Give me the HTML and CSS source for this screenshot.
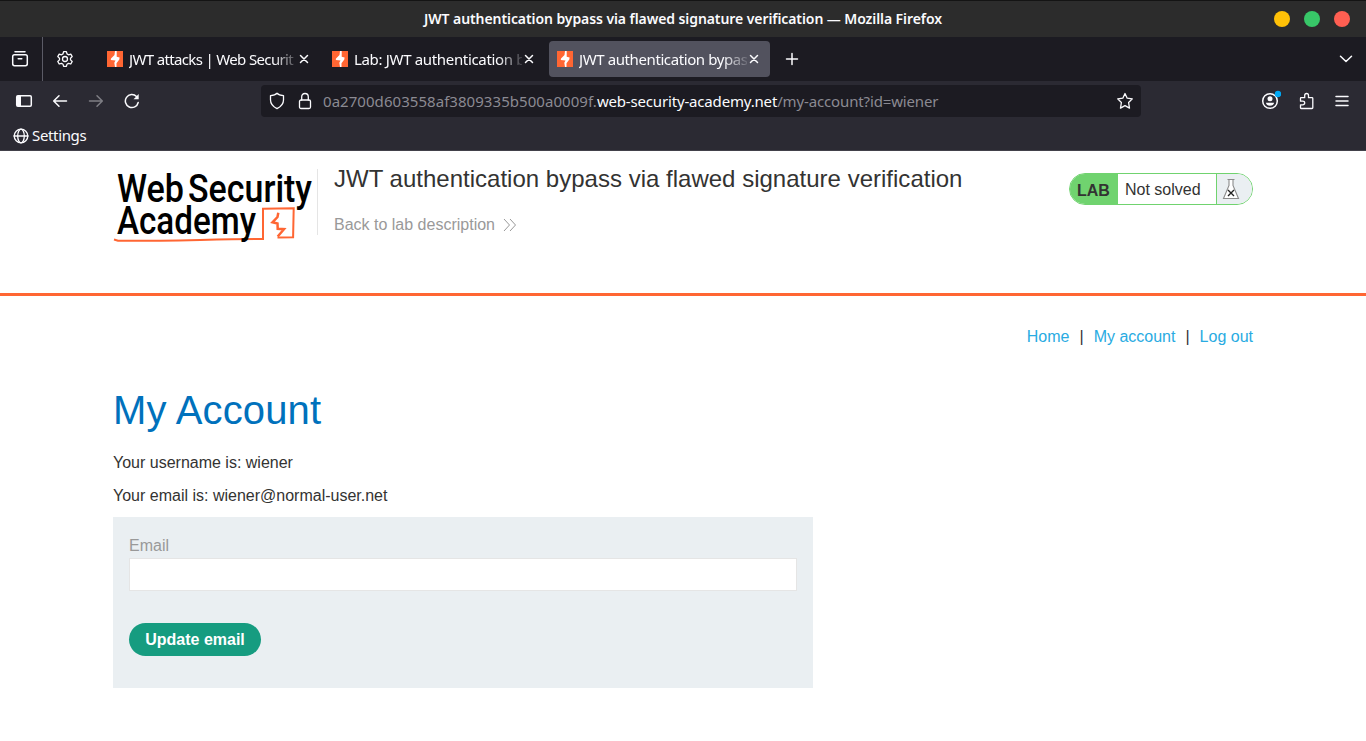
FILE: index.html
```html
<!DOCTYPE html>
<html lang="en">
<head>
<meta charset="utf-8">
<title>JWT authentication bypass via flawed signature verification</title>
<link rel="stylesheet" href="styles.css">
</head>
<body>
<svg class="defs" width="0" height="0">
  <symbol id="bolt" viewBox="0 0 16 16"><path fill="#ff6633" d="M0 0h16v16H0z"/><path fill="#fff" d="M8 0h1.700v5.700l2.900.9-.3 2L9.500 12.300V16H8l-.7-4.200 1.200-2.200-4.700-.7.200-1.400L7.500 4z"/></symbol>
  <symbol id="close" viewBox="0 0 10 10"><path d="M1.500 1.500l7 7M8.500 1.500l-7 7" stroke="#fbfbfe" stroke-width="1.500" stroke-linecap="round"/></symbol>
</svg>
<header class="browser">
  <div class="titlebar">
    <span class="window-title">JWT authentication bypass via flawed signature verification — Mozilla Firefox</span>
    <div class="window-buttons"><i class="min"></i><i class="max"></i><i class="quit"></i></div>
  </div>
  <div class="tabbar">
    <div class="tab-tool archive"><svg class="icon" width="18" height="18" viewBox="0 0 18 18"><path d="M4 1.700h10M3.500 4.700h11q1.800 0 1.800 1.800v7.300q0 1.900-1.800 1.900h-11q-1.800 0-1.800-1.900V6.500q0-1.800 1.800-1.800zM7.200 8.800h3.600"/></svg></div>
    <div class="tab-tool gear"><svg class="icon thin" width="18" height="18" viewBox="0 0 18 18"><circle cx="9" cy="9" r="2.500"/><path d="M7.600 1.600h2.800l.6 2.300 1.500.9 2.300-.7 1.400 2.500-1.700 1.600v1.700l1.700 1.600-1.400 2.500-2.300-.7-1.500.9-.6 2.200H7.600L7 14.200l-1.500-.9-2.300.7-1.400-2.500 1.700-1.600V8.200L1.800 6.600l1.400-2.500 2.300.7L7 3.900z"/></svg></div>
    <div class="tabs">
      <div class="tab"><svg width="16" height="16"><use href="#bolt"/></svg><span class="tab-title t1">JWT attacks | Web Securit</span><svg class="x" width="10" height="10"><use href="#close"/></svg></div>
      <div class="tab"><svg width="16" height="16"><use href="#bolt"/></svg><span class="tab-title t2">Lab: JWT authentication b</span><svg class="x" width="10" height="10"><use href="#close"/></svg></div>
      <div class="tab active"><svg width="16" height="16"><use href="#bolt"/></svg><span class="tab-title t3">JWT authentication bypas</span><svg class="x" width="10" height="10"><use href="#close"/></svg></div>
    </div>
    <svg class="icon plus" width="14" height="14" viewBox="0 0 14 14"><path d="M7 1.500v11M1.500 7h11"/></svg>
    <svg class="icon chevron" width="14" height="8" viewBox="0 0 14 8"><path d="M1.500 1.200L7 6.500l5.500-5.300"/></svg>
  </div>
  <div class="toolbar">
    <svg class="icon sidebar" width="18" height="14" viewBox="0 0 18 14"><rect x="1.700" y="1.700" width="14.600" height="10.600" rx="1.200"/><path class="solid" d="M2 2h4v10H2z"/></svg>
    <svg class="icon back" width="16" height="14" viewBox="0 0 16 14"><path d="M14.500 7H2M7 1.700L1.700 7 7 12.300"/></svg>
    <svg class="icon forward" width="16" height="14" viewBox="0 0 16 14"><path d="M1.500 7H14M9 1.700L14.300 7 9 12.300"/></svg>
    <svg class="icon reload" width="16" height="16" viewBox="0 0 16 16"><path d="M14.200 9.500A6.500 6.500 0 1 1 12.500 3.500"/><path class="solid" d="M14.700 1v5.200H9.500z"/></svg>
    <div class="urlbar">
      <svg class="icon thin shield" width="16" height="18" viewBox="0 0 16 18"><path d="M8 1.300C6.500 3 3.800 3.500 1.500 3.600V8c0 3.600 2.700 6.700 6.500 8.700 3.800-2 6.500-5.100 6.500-8.700V3.600C12.200 3.500 9.500 3 8 1.300z"/></svg>
      <svg class="icon thin lock" width="14" height="18" viewBox="0 0 14 18"><rect x="1.500" y="8" width="11" height="8.500" rx="1.500"/><path d="M3.700 8V5q0-3.500 3.300-3.500T10.300 5v3"/></svg>
      <span class="url"><span class="u1">0a2700d603558af3809335b500a0009f.</span><b class="u2">web-security-academy.net</b><span class="u3">/my-account?id=wiener</span></span>
      <svg class="icon thin star" width="18" height="18" viewBox="0 0 18 18"><path d="M9 1.500l2.200 4.700 5.100.7-3.700 3.600.9 5.600L9 13.600 4.500 16.100l.9-5.600L1.700 6.900l5.100-.7z"/></svg>
    </div>
    <svg class="icon account" width="20" height="20" viewBox="0 0 20 20"><circle cx="9" cy="11" r="7.300"/><circle class="solid" cx="9" cy="8.800" r="2.500"/><path class="solid" d="M4.800 12.700h8.400q-.8 3-4.200 3t-4.200-3z"/><circle cx="17" cy="4" r="3.200" fill="#00a8f4" stroke="none"/></svg>
    <svg class="icon thin puzzle" width="16" height="18" viewBox="0 0 16 18"><path d="M2 5.700h3.700V3.500q0-2 1.900-2t1.900 2v2.200H13q.8 0 .8.800v9.200q0 .8-.8.800H2q-.5 0-.5-.8v-2.900h2.200q2 0 2-1.800t-2-1.800H1.500V6.500q0-.8.500-.8z"/></svg>
    <svg class="icon menu" width="14" height="12" viewBox="0 0 14 12"><path d="M1 1.500h12M1 6h12M1 10.500h12"/></svg>
  </div>
  <div class="bookmarks">
    <svg class="icon thin" width="16" height="16" viewBox="0 0 16 16"><circle cx="8" cy="8" r="6.800"/><ellipse cx="8" cy="8" rx="3.300" ry="6.800"/><path d="M1 8h14"/></svg>
    <span class="bm">Settings</span>
  </div>
</header>
<section class="lab-header">
  <svg class="logo" width="204" height="76" viewBox="0 0 204 76">
    <g class="logo-text">
      <text x="4" y="34" textLength="67" lengthAdjust="spacingAndGlyphs">Web</text>
      <text x="75" y="34" textLength="124" lengthAdjust="spacingAndGlyphs">Security</text>
    </g>
    <path d="M1 71.500l4 1.300c50 .4 95-1.600 145-1.800V40.800l30.700-.6-.6 29-15.600.2" fill="none" stroke="#ff6633" stroke-width="2"/>
    <path d="M165.300 44.700l-.8 4.300-5 5.300 5 1.200.2 5.300 6.300.4-6.300 7.300" fill="none" stroke="#ff6633" stroke-width="2.500"/>
    <g class="logo-text"><text x="4" y="66" textLength="139" lengthAdjust="spacingAndGlyphs">Academy</text></g>
  </svg>
  <div class="lab-title">
    <h2>JWT authentication bypass via flawed signature verification</h2>
    <a class="back-link">Back to lab description <svg width="14" height="14" viewBox="0 0 14 14"><path d="M1 1l5.500 6L1 13M7 1l5.500 6L7 13" fill="none" stroke="#999"/></svg></a>
  </div>
  <div class="status"><b>LAB</b><span>Not solved</span><i><svg width="18" height="22" viewBox="0 0 18 22"><path d="M5.500 1.500h7M7 1.500v6L1.500 20.500h15L11 7.500v-6" fill="#fff" stroke="#8b8b8b" stroke-width="1.100"/><path d="M6 12l6 6M12 12l-6 6" stroke="#222" stroke-width="1.400"/></svg></i></div>
</section>
<main class="content">
  <nav><a>Home</a><span>|</span><a>My account</a><span>|</span><a>Log out</a></nav>
  <h1>My Account</h1>
  <p>Your username is: wiener</p>
  <p>Your email is: wiener@normal-user.net</p>
  <form>
    <label for="email">Email</label>
    <input id="email" type="text">
    <button type="button">Update email</button>
  </form>
</main>
</body>
</html>
```
FILE: styles.css
```css
* { box-sizing: border-box; }
body { margin: 0; background: #fff; color: #333332; font: 16px/1.15 "Liberation Sans", Arial, sans-serif; height: 741px; overflow: hidden; }
svg { display: block; flex: none; }
.defs { position: absolute; }
.browser { height: 151px; background: #2b2a33; border-bottom: 1px solid #42414a; color: #fbfbfe; font: 15px/20px "Noto Sans", sans-serif; }
.titlebar { display: grid; grid-template-columns: 1fr auto 1fr; align-items: center; height: 37px; background: #2c2c2c; border-top: 1px solid #141414; font-size: 14px; font-weight: 600; }
.window-title { grid-column: 2; white-space: nowrap; letter-spacing: -.08px; }
.window-buttons { display: flex; justify-content: flex-end; gap: 14px; padding-right: 16px; }
.window-buttons i { width: 16px; height: 16px; border-radius: 50%; }
.min { background: #ffc107; }
.max { background: #38c768; }
.quit { background: #ff5f52; }
.icon { fill: none; stroke: #fbfbfe; stroke-width: 1.5; stroke-linecap: round; stroke-linejoin: round; }
.icon.thin { stroke-width: 1.3; }
.icon .solid { fill: #fbfbfe; stroke: none; }
.tabbar { display: flex; align-items: center; height: 44px; background: #1c1b22; }
.archive { width: 43px; height: 44px; padding: 13px 0 0 11px; border-right: 1px solid #5b5b66; }
.gear { width: 56px; padding-left: 13px; }
.tabs { display: flex; gap: 4px; }
.tab { display: flex; align-items: center; width: 221px; height: 36px; padding: 0 8px; border-radius: 4px; }
.tab.active { background: #52525e; }
.tab-title { width: 168px; margin-left: 6px; overflow: hidden; white-space: nowrap; -webkit-mask-image: linear-gradient(to right, #000 144px, transparent 172px); mask-image: linear-gradient(to right, #000 144px, transparent 172px); }
.t1 { letter-spacing: -.65px; }
.t2 { letter-spacing: -.33px; }
.t3 { letter-spacing: -.4px; }
.x { margin-left: 2px; }
.plus { margin-left: 15px; }
.chevron { margin-left: auto; margin-right: 13px; }
.toolbar { display: flex; align-items: center; height: 40px; }
.sidebar { margin-left: 15px; }
.back { margin-left: 19px; }
.forward { margin-left: 20px; opacity: .4; }
.reload { margin-left: 20px; }
.urlbar { display: flex; align-items: center; width: 880px; height: 32px; margin-left: 121px; padding: 0 7px 0 8px; border-radius: 4px; background: #1c1b22; }
.lock { margin-left: 13px; }
.url { margin-left: 11px; color: #8b8a92; white-space: nowrap; display: flex; }
.u1 { letter-spacing: .05px; }
.u2 { color: #fbfbfe; font-weight: 400; letter-spacing: -.17px; }
.u3 { letter-spacing: -.14px; }
.star { margin-left: auto; }
.account { margin: -2px 0 0 120px; }
.puzzle { margin-left: 18px; margin-top: -1px; }
.menu { margin-left: 20px; }
.bookmarks { display: flex; align-items: center; gap: 3px; height: 29px; padding-left: 13px; }
.bm { margin-top: -2px; letter-spacing: -.35px; }
.lab-header { display: flex; align-items: flex-start; height: 145px; padding: 0 113px; border-bottom: 3px solid #ff6633; }
.logo { margin-top: 17px; }
.logo-text { font: 500 38px Roboto, sans-serif; fill: #000; }
.lab-title { margin-top: 18px; height: 66px; padding-left: 16px; border-left: 1px solid #e5e5e5; white-space: nowrap; }
h2 { margin: -4px 0 0; font-size: 24px; line-height: 28px; font-weight: 400; letter-spacing: .01px; }
.back-link { display: flex; gap: 8px; align-items: center; margin-top: 23px; line-height: 18px; color: #999; }
.status { display: flex; margin: 22px 0 0 auto; width: 184px; height: 32px; border: 1px solid #70d36f; border-radius: 16px; overflow: hidden; line-height: 32px; }
.status b { width: 48px; padding-left: 7px; background: #70d36f; }
.status span { width: 98px; padding-left: 7px; }
.status b { line-height: 33px; }
.status i { flex: 1; padding: 4px 0 0 5px; border-left: 1px solid #70d36f; background: #eaeff2; }
.content { padding: 0 113px; }
nav { display: flex; justify-content: flex-end; gap: 10px; margin-top: 32px; line-height: 18px; color: #29abe2; }
nav span { color: #333; }
h1 { margin: 41px 0 0; font-size: 40px; line-height: 46px; font-weight: 400; color: #0071bc; letter-spacing: .15px; }
p { margin: 21px 0 0; line-height: 18px; }
p + p { margin-top: 15px; }
form { width: 700px; height: 171px; margin-top: 12px; padding: 20px 16px; background: #eaeff2; }
label { display: block; line-height: 18px; color: #999; }
input { display: block; width: 668px; height: 33px; margin-top: 3px; border: 1px solid #e5e5e5; background: #fff; }
button { width: 132px; height: 33px; margin-top: 32px; padding: 0; border: 0; border-radius: 17px; background: #169c80; color: #fff; font: bold 16px "Liberation Sans", Arial, sans-serif; }
```
